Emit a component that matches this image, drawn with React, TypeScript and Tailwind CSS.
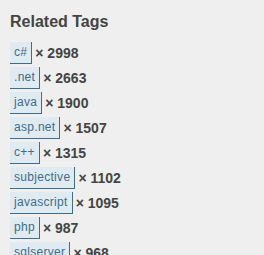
const tags = [
  { name: "c#", count: 2998 },
  { name: ".net", count: 2663 },
  { name: "java", count: 1900 },
  { name: "asp.net", count: 1507 },
  { name: "c++", count: 1315 },
  { name: "subjective", count: 1102 },
  { name: "javascript", count: 1095 },
  { name: "php", count: 987 },
  { name: "sqlserver", count: 968 },
];

export default function App() {
  return (
    <div className="h-[255px] w-[264px] overflow-hidden bg-[#efefef] pl-[10px] pt-[13px] font-['Liberation_Sans',Arial,sans-serif]">
      <h4 className="mb-[11px] text-[16px] font-bold leading-[18px] text-[#444]">
        Related Tags
      </h4>
      <div className="flex flex-col gap-[3px]">
        {tags.map((tag) => (
          <div key={tag.name} className="flex items-center">
            <a className="border-b border-r border-[#3e6d8e] bg-[#e0eaf1] px-[4px] py-[3px] text-[12px] leading-[15px] tracking-[0.3px] text-[#3e6d8e]">
              {tag.name}
            </a>
            <span className="ml-[3px] text-[14px] font-bold text-[#444]">
              × {tag.count}
            </span>
          </div>
        ))}
      </div>
    </div>
  );
}
